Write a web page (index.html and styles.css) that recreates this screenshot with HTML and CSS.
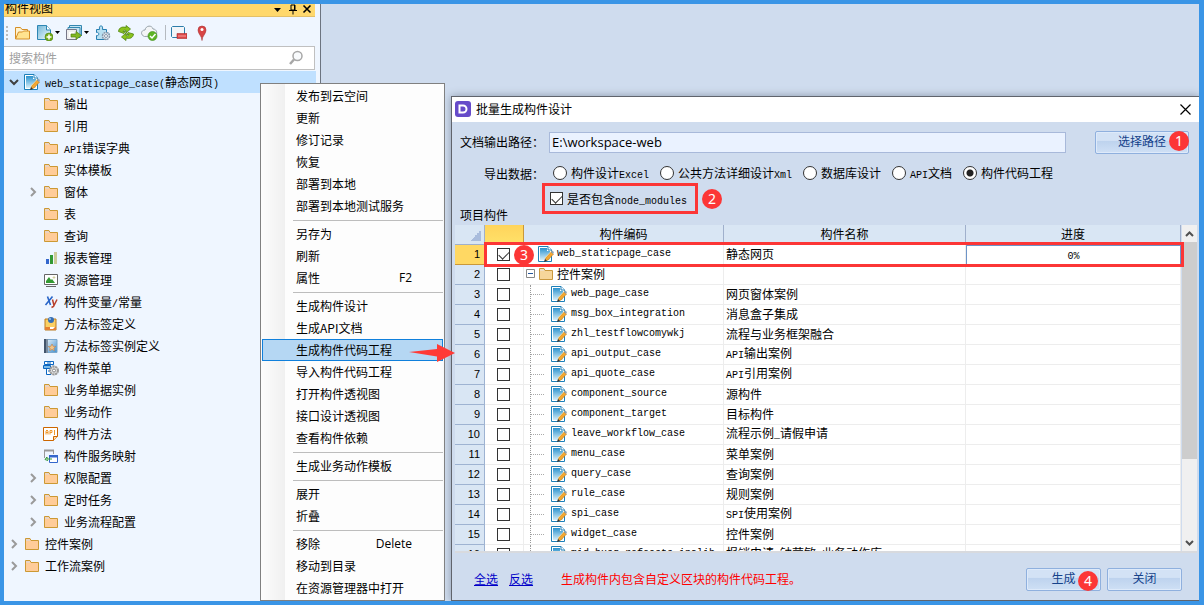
FILE: index.html
```html
<!DOCTYPE html>
<html lang="zh-CN">
<head>
<meta charset="utf-8">
<title>批量生成构件设计</title>
<link rel="stylesheet" href="styles.css">
</head>
<body>
<svg class="defs" aria-hidden="true">
  <defs>
    <linearGradient id="g-doc" x1="0" y1="0" x2="0" y2="1"><stop offset="0" stop-color="#2b93cf"/><stop offset="1" stop-color="#d8eef8"/></linearGradient>
    <linearGradient id="g-page" x1="0" y1="0" x2="1" y2="1"><stop offset="0" stop-color="#6fb6d6"/><stop offset="1" stop-color="#f4fbff"/></linearGradient>
    <linearGradient id="g-book" x1="0" y1="0" x2="1" y2="1"><stop offset="0" stop-color="#f4f8fb"/><stop offset="1" stop-color="#3f8fd0"/></linearGradient>
    <symbol id="folder" viewBox="0 0 16 16"><path d="M1.500 2.500h4.500l1 2h7.500v9h-13z" fill="#ffcc99" stroke="#cc9933"/><path d="M2 3h3.500l1 2H2z" fill="#e9d3c3"/></symbol>
    <symbol id="folder-y" viewBox="0 0 16 16"><path d="M1.500 2.500h4.500l1 2h7.500v9h-13z" fill="#f6d69a" stroke="#c9983e"/><path d="M2 3h3.500l1 2H2z" fill="#f0dfc4"/></symbol>
    <symbol id="doc" viewBox="0 0 16 16"><path d="M1 .5h9l3.500 3.500v11.500H.5V.5z" fill="#fff" stroke="#1c7fb8"/><path d="M2 2h7v3h3v9H2z" fill="url(#g-doc)"/><path d="M10 .5V4h3.500" fill="#fff" stroke="#1c7fb8"/><path d="M7 15l1-3.500 5-5.500 2.500 2L10 14z" fill="#f5a832" stroke="#b87718" stroke-width=".6"/><path d="M7 12l7-7.500" stroke="#ffe3a0" stroke-width=".8"/><path d="M13 6l1-1.500 2 1.500-1 2z" fill="#8da3b8"/><path d="M6 16l1-3 2 2z" fill="#333"/></symbol>
    <symbol id="chev" viewBox="0 0 10 10"><path d="M3 1l4 4-4 4" fill="none" stroke="#9a9a9a" stroke-width="2"/></symbol>
    <symbol id="chev-down" viewBox="0 0 10 10"><path d="M1 3l4 4 4-4" fill="none" stroke="#404040" stroke-width="2"/></symbol>
  </defs>
</svg>
<div class="app">
  <aside class="side">
    <header class="side-title"><span>构件视图</span>
      <svg width="38" height="12" viewBox="0 0 38 12"><path d="M0 5h7l-3.500 4z"/><path d="M17 2h4v5h-4zM15 7.500h8M19 8v3.500M20.500 2v5" fill="none" stroke="#000"/><path d="M29.500 2.500l7 7m0-7l-7 7" stroke="#000" stroke-width="1.600"/></svg>
    </header>
    <div class="toolbar">
      <svg class="grip" width="3" height="16" viewBox="0 0 3 16"><path d="M0 1h2v2H0zM0 5h2v2H0zM0 9h2v2H0zM0 13h2v2H0z" fill="#bbb"/></svg>
      <button aria-label="打开"><svg width="16" height="16" viewBox="0 0 16 16"><path d="M1.500 14V2.500h5l1.500 2h5.500V7" fill="#fff3cf" stroke="#d58f28"/><path d="M1.500 14l3-7h4l1 -1h6v8z" fill="#ffe390" stroke="#d58f28"/></svg></button>
      <button class="drop" aria-label="新建"><svg width="16" height="16" viewBox="0 0 16 16"><path d="M.5.5h9L13.500 5v9.500H.5z" fill="url(#g-page)" stroke="#2c86b4"/><path d="M9.500.5V5h4" fill="#fff" stroke="#2c86b4"/><circle cx="12" cy="12" r="4" fill="#73ad18" stroke="#4e8212" stroke-width=".6"/><path d="M12 9.500v5M9.500 12h5" stroke="#fff" stroke-width="1.500"/></svg><svg width="5" height="4" viewBox="0 0 5 4"><path d="M0 0h5L2.500 3z"/></svg></button>
      <button class="drop" aria-label="导出"><svg width="16" height="16" viewBox="0 0 16 16"><path d="M3.500.5h12v10h-12z" fill="#c4e4f2" stroke="#3387b0"/><path d="M2 2.500h12v10H2z" fill="#c4e4f2" stroke="#3387b0"/><path d="M.5 4.500h10v10H.5z" fill="#eee" stroke="#778"/><path d="M3 7h5v5H3z" fill="#fff"/><path d="M5 9h5V6.500l5.500 4-5.500 4V12H5z" fill="#82b821" stroke="#517e12" stroke-width=".7"/></svg><svg width="5" height="4" viewBox="0 0 5 4"><path d="M0 0h5L2.500 3z"/></svg></button>
      <button aria-label="组件"><svg width="16" height="16" viewBox="0 0 16 16"><path d="M1.500 4.500h3c-1-5 4-5 3 0h4V8c4-1 3 4 0 3v3.500h-10v-4c3 1 3-4 0-3z" fill="#b9e0f1" stroke="#267fb1"/><circle cx="11" cy="11" r="3.500" fill="#e6edf3" stroke="#8798aa" stroke-width="1.500" stroke-dasharray="2 .7"/><circle cx="11" cy="11" r="1.500" fill="#fff" stroke="#8798aa"/></svg></button>
      <button aria-label="刷新"><svg width="16" height="16" viewBox="0 0 16 16"><path d="M.5 6.500C1 2 5 1.500 8 2.500V.5L12.500 4 8 8V5.500C6.500 5 5.500 5 5 6.500h2.500L6 8.500zM15.500 9c-.5 4.500-4.500 5-7.500 4v2.500L3.500 12 8 8v2.500c1.500.5 2.500.5 3-1H8.500L10 7.500z" fill="#8ac31d" stroke="#4f8311" stroke-width=".8"/></svg></button>
      <button aria-label="提交"><svg width="17" height="16" viewBox="0 0 17 16"><path d="M3.500 11.500C-1 10 0 5 4 5c1-5 7-5 8-1 4 0 5 5 2 7z" fill="#f3f5f7" stroke="#98a3aa"/><circle cx="11.500" cy="11" r="4.500" fill="#5db526" stroke="#3c8c16" stroke-width=".6"/><path d="M9 11l2 2 3.500-4" fill="none" stroke="#fff" stroke-width="1.500"/></svg></button>
      <span class="bar"></span>
      <button class="last-tool" aria-label="移除"><svg width="16" height="16" viewBox="0 0 16 16"><path d="M1.500 1.500h11l1 1v9l-1 1h-11l-1-1v-9z" fill="#f2f5f8" stroke="#2c7daa"/><path d="M6 8.500h10v5H6z" fill="#dc4747" stroke="#a82a2a" stroke-width=".6"/><path d="M7 11h8" stroke="#f5a0a0"/></svg></button>
      <button aria-label="定位"><svg width="10" height="16" viewBox="0 0 10 16"><path d="M5 15.500C5 11 1 9 1 5a4 4 0 0 1 8 0c0 4-4 6-4 10.500z" fill="#d84545" stroke="#a93434" stroke-width=".6"/><circle cx="5" cy="4.500" r="1.500" fill="#fff"/></svg></button>
    </div>
    <div class="search"><input type="text" placeholder="搜索构件" aria-label="搜索构件"><svg width="16" height="16" viewBox="0 0 16 16"><circle cx="9.500" cy="6" r="4.500" fill="#f9fbfd" stroke="#a7a7a7" stroke-width="1.500"/><path d="M6 9.500L2 14" stroke="#a7a7a7" stroke-width="2.500"/></svg></div>
    <ul class="tree">
      <li class="on"><svg class="tw"><use href="#chev-down"/></svg><svg class="ic"><use href="#doc"/></svg><span><span class="mono">web_staticpage_case(</span>静态网页<span class="mono">)</span></span></li>
      <li class="l1"><i class="tw"></i><svg class="ic"><use href="#folder"/></svg>输出</li>
      <li class="l1"><i class="tw"></i><svg class="ic"><use href="#folder"/></svg>引用</li>
      <li class="l1"><i class="tw"></i><svg class="ic"><use href="#folder"/></svg><span><span class="mono">API</span>错误字典</span></li>
      <li class="l1"><i class="tw"></i><svg class="ic"><use href="#folder"/></svg>实体模板</li>
      <li class="l1"><svg class="tw"><use href="#chev"/></svg><svg class="ic"><use href="#folder"/></svg>窗体</li>
      <li class="l1"><i class="tw"></i><svg class="ic"><use href="#folder"/></svg>表</li>
      <li class="l1"><i class="tw"></i><svg class="ic"><use href="#folder"/></svg>查询</li>
      <li class="l1"><i class="tw"></i><svg class="ic" viewBox="0 0 16 16"><path d="M3 9h3v5H3z" fill="#3366cc"/><path d="M7 5h3v9H7z" fill="#339933"/><path d="M11 2h3v12h-3z" fill="#cccc99"/></svg>报表管理</li>
      <li class="l1"><i class="tw"></i><svg class="ic" viewBox="0 0 16 16"><path d="M1.500 2.500h13v10h-13z" fill="#fff" stroke="#666"/><path d="M3 11V9l3-4 2 3 1-1 3 4z" fill="#339933"/><path d="M11 3.500l.6 1.400 1.400.6-1.400.6-.6 1.400-.6-1.400L9 5.500l1.400-.6z" fill="#cccc99"/><path d="M3 14.500h10" stroke="#666"/></svg>资源管理</li>
      <li class="l1"><i class="tw"></i><svg class="ic" viewBox="0 0 16 16"><path d="M4.500 2.500l3 8.500M9.500 2.500L2.500 11" stroke="#2a66c8" stroke-width="1.600" fill="none"/><path d="M9.500 5.500l1.500 6M14 5.500l-3.500 7-2 1" stroke="#b8402c" stroke-width="1.500" fill="none"/></svg><span>构件变量<span class="mono">/</span>常量</span></li>
      <li class="l1"><i class="tw"></i><svg class="ic" viewBox="0 0 16 16"><path d="M2 3h11v11H2z" fill="#fbd064" stroke="#b97a20"/><path d="M2 11h11v3H2z" fill="#e58032"/><path d="M7 11h5l-2 2H7z" fill="#fff"/><circle cx="8" cy="4" r="3" fill="#356eb4"/><circle cx="7" cy="3" r="1" fill="#9fc4ea"/></svg>方法标签定义</li>
      <li class="l1"><i class="tw"></i><svg class="ic" viewBox="0 0 16 16"><path d="M1.500 1.500h12.500v13h-12.500z" fill="url(#g-book)" stroke="#7ba7cc"/><path d="M1 1h4v14H1z" fill="#43546b"/><path d="M4 1v14" stroke="#b8c8d8"/><path d="M9 6l1.200 2.300 2.600.2-2 1.700.7 2.500L9 11.400l-2.400 1.300.6-2.500-2-1.700 2.600-.2z" fill="#f3c486" stroke="#b87d4b" stroke-width=".6"/></svg>方法标签实例定义</li>
      <li class="l1"><i class="tw"></i><svg class="ic" viewBox="0 0 16 16"><path d="M2 1.500h8v4M3.500 8v6.500H8" fill="#fff" stroke="#0a66c2"/><path d="M1.500 1.500h9v3h-9z" fill="#fff" stroke="#0a66c2"/><path d="M.5 5.500h7v3h-7z" fill="#7dbbe8" stroke="#0a66c2"/><path d="M4 3h4M5 11h3" stroke="#0a66c2"/><circle cx="11" cy="10.500" r="4" fill="#ddd" stroke="#999" stroke-width="2" stroke-dasharray="2.200 .6"/><circle cx="11" cy="10.500" r="1.500" fill="#fff" stroke="#888"/></svg>构件菜单</li>
      <li class="l1"><i class="tw"></i><svg class="ic"><use href="#folder"/></svg>业务单据实例</li>
      <li class="l1"><i class="tw"></i><svg class="ic"><use href="#folder"/></svg>业务动作</li>
      <li class="l1"><i class="tw"></i><svg class="ic" viewBox="0 0 16 16"><path d="M.5 1.500h14v9l-4 4H.5z" fill="#fff" stroke="#cc6600"/><path d="M10.500 14.500v-4h4" fill="#ffdca8" stroke="#cc6600"/><path d="M3 8.500V5l1-1 1 1v3.500M3 6.500h2M7 8.500v-4h2v2H7M11.500 4v5" fill="none" stroke="#f0992e"/></svg>构件方法</li>
      <li class="l1"><i class="tw"></i><svg class="ic" viewBox="0 0 16 16"><path d="M1.500 10V2.500h9V6" fill="none" stroke="#999"/><path d="M1 1.500h10v2H1z" fill="#999"/><path d="M6.500 8.500h8v6h-8z" fill="#fff" stroke="#3366cc"/><path d="M6 7h9v2.500H6z" fill="#3366cc"/><path d="M9 11H4V9l-2 2.500 3 1" fill="none" stroke="#339933"/></svg>构件服务映射</li>
      <li class="l1"><svg class="tw"><use href="#chev"/></svg><svg class="ic"><use href="#folder"/></svg>权限配置</li>
      <li class="l1"><svg class="tw"><use href="#chev"/></svg><svg class="ic"><use href="#folder"/></svg>定时任务</li>
      <li class="l1"><svg class="tw"><use href="#chev"/></svg><svg class="ic"><use href="#folder"/></svg>业务流程配置</li>
      <li><svg class="tw"><use href="#chev"/></svg><svg class="ic"><use href="#folder"/></svg>控件案例</li>
      <li><svg class="tw"><use href="#chev"/></svg><svg class="ic"><use href="#folder"/></svg>工作流案例</li>
    </ul>
  </aside>

  <menu class="menu">
    <li><button>发布到云空间</button></li>
    <li><button>更新</button></li>
    <li><button>修订记录</button></li>
    <li><button>恢复</button></li>
    <li><button>部署到本地</button></li>
    <li><button>部署到本地测试服务</button></li>
    <li class="sep"></li>
    <li><button>另存为</button></li>
    <li><button>刷新</button></li>
    <li><button>属性<kbd>F2</kbd></button></li>
    <li class="sep"></li>
    <li><button>生成构件设计</button></li>
    <li><button>生成API文档</button></li>
    <li><button class="hot">生成构件代码工程</button></li>
    <li><button>导入构件代码工程</button></li>
    <li><button>打开构件透视图</button></li>
    <li><button>接口设计透视图</button></li>
    <li><button>查看构件依赖</button></li>
    <li class="sep"></li>
    <li><button>生成业务动作模板</button></li>
    <li class="sep"></li>
    <li><button>展开</button></li>
    <li><button>折叠</button></li>
    <li class="sep"></li>
    <li><button>移除<kbd>Delete</kbd></button></li>
    <li><button>移动到目录</button></li>
    <li><button>在资源管理器中打开</button></li>
  </menu>

  <section class="dialog" role="dialog" aria-labelledby="dlg-title">
    <header class="dlg-head">
      <svg width="16" height="16" viewBox="0 0 16 16"><rect width="16" height="16" rx="3" fill="#664bc9"/><path d="M4.500 4.500H8a3.500 3.500 0 0 1 0 7H4.500z" fill="none" stroke="#fff" stroke-width="2"/></svg>
      <h1 id="dlg-title">批量生成构件设计</h1>
      <button aria-label="关闭窗口"><svg width="11" height="11" viewBox="0 0 11 11"><path d="M.5.5l10 10m0-10l-10 10" stroke="#000" stroke-width="1.200"/></svg></button>
    </header>
    <div class="path-row">
      <label for="path">文档输出路径：</label>
      <input id="path" type="text" value="E:\workspace-web">
      <button class="btn wide">选择路径<b class="badge">1</b></button>
    </div>
    <div class="radio-row">
      <span class="cap">导出数据：</span>
      <label><input type="radio" name="kind"><span>构件设计<span class="mono">Excel</span></span></label>
      <label><input type="radio" name="kind"><span>公共方法详细设计<span class="mono">Xml</span></span></label>
      <label><input type="radio" name="kind"><span>数据库设计</span></label>
      <label><input type="radio" name="kind"><span><span class="mono">API</span>文档</span></label>
      <label><input type="radio" name="kind" checked><span>构件代码工程</span></label>
    </div>
    <div class="check-row">
      <label class="red-box"><input type="checkbox" checked><span>是否包含<span class="mono">node_modules</span></span></label>
      <b class="badge">2</b>
    </div>
    <h2>项目构件</h2>
    <div class="grid">
      <div class="scroller">
        <table>
          <colgroup><col class="c-no"><col class="c-ck"><col class="c-code"><col class="c-name"><col></colgroup>
          <thead><tr><th class="corner"></th><th class="gold"></th><th>构件编码</th><th>构件名称</th><th>进度</th></tr></thead>
          <tbody>
            <tr class="cur"><th>1</th><td class="ck"><input type="checkbox" aria-label="1" checked></td><td><div class="node top"><svg class="ic"><use href="#doc"/></svg><span class="mono">web_staticpage_case</span></div></td><td>静态网页</td><td class="pct"><span class="mono">0%</span></td></tr>
            <tr><th>2</th><td class="ck"><input type="checkbox" aria-label="2"></td><td><div class="node group"><svg width="9" height="9" viewBox="0 0 9 9"><path d="M.5.5h8v8h-8z" fill="#fff" stroke="#888"/><path d="M2 4.500h5" stroke="#24569c"/></svg><svg class="ic"><use href="#folder-y"/></svg>控件案例</div></td><td></td><td></td></tr>
            <tr><th>3</th><td class="ck"><input type="checkbox" aria-label="3"></td><td><div class="node leaf"><i></i><svg class="ic"><use href="#doc"/></svg><span class="mono">web_page_case</span></div></td><td>网页窗体案例</td><td></td></tr>
            <tr><th>4</th><td class="ck"><input type="checkbox" aria-label="4"></td><td><div class="node leaf"><i></i><svg class="ic"><use href="#doc"/></svg><span class="mono">msg_box_integration</span></div></td><td>消息盒子集成</td><td></td></tr>
            <tr><th>5</th><td class="ck"><input type="checkbox" aria-label="5"></td><td><div class="node leaf"><i></i><svg class="ic"><use href="#doc"/></svg><span class="mono">zhl_testflowcomywkj</span></div></td><td>流程与业务框架融合</td><td></td></tr>
            <tr><th>6</th><td class="ck"><input type="checkbox" aria-label="6"></td><td><div class="node leaf"><i></i><svg class="ic"><use href="#doc"/></svg><span class="mono">api_output_case</span></div></td><td><span class="mono">API</span>输出案例</td><td></td></tr>
            <tr><th>7</th><td class="ck"><input type="checkbox" aria-label="7"></td><td><div class="node leaf"><i></i><svg class="ic"><use href="#doc"/></svg><span class="mono">api_quote_case</span></div></td><td><span class="mono">API</span>引用案例</td><td></td></tr>
            <tr><th>8</th><td class="ck"><input type="checkbox" aria-label="8"></td><td><div class="node leaf"><i></i><svg class="ic"><use href="#doc"/></svg><span class="mono">component_source</span></div></td><td>源构件</td><td></td></tr>
            <tr><th>9</th><td class="ck"><input type="checkbox" aria-label="9"></td><td><div class="node leaf"><i></i><svg class="ic"><use href="#doc"/></svg><span class="mono">component_target</span></div></td><td>目标构件</td><td></td></tr>
            <tr><th>10</th><td class="ck"><input type="checkbox" aria-label="10"></td><td><div class="node leaf"><i></i><svg class="ic"><use href="#doc"/></svg><span class="mono">leave_workflow_case</span></div></td><td>流程示例<span class="mono">_</span>请假申请</td><td></td></tr>
            <tr><th>11</th><td class="ck"><input type="checkbox" aria-label="11"></td><td><div class="node leaf"><i></i><svg class="ic"><use href="#doc"/></svg><span class="mono">menu_case</span></div></td><td>菜单案例</td><td></td></tr>
            <tr><th>12</th><td class="ck"><input type="checkbox" aria-label="12"></td><td><div class="node leaf"><i></i><svg class="ic"><use href="#doc"/></svg><span class="mono">query_case</span></div></td><td>查询案例</td><td></td></tr>
            <tr><th>13</th><td class="ck"><input type="checkbox" aria-label="13"></td><td><div class="node leaf"><i></i><svg class="ic"><use href="#doc"/></svg><span class="mono">rule_case</span></div></td><td>规则案例</td><td></td></tr>
            <tr><th>14</th><td class="ck"><input type="checkbox" aria-label="14"></td><td><div class="node leaf"><i></i><svg class="ic"><use href="#doc"/></svg><span class="mono">spi_case</span></div></td><td><span class="mono">SPI</span>使用案例</td><td></td></tr>
            <tr><th>15</th><td class="ck"><input type="checkbox" aria-label="15"></td><td><div class="node leaf"><i></i><svg class="ic"><use href="#doc"/></svg><span class="mono">widget_case</span></div></td><td>控件案例</td><td></td></tr>
            <tr><th>16</th><td class="ck"><input type="checkbox" aria-label="16"></td><td><div class="node leaf"><i></i><svg class="ic"><use href="#doc"/></svg><span class="mono">mid_bxsq_refcosts_inalib</span></div></td><td>报销申请<span class="mono">_</span>钟莹敏<span class="mono">_</span>业务动作库</td><td></td></tr>
          </tbody>
        </table>
      </div>
      <div class="scrollbar">
        <svg width="15" height="17" viewBox="0 0 15 17"><path d="M4 11l3.500-3.500L11 11" fill="none" stroke="#505050" stroke-width="2"/></svg>
        <span class="thumb"></span><span class="rest"></span>
        <svg width="15" height="17" viewBox="0 0 15 17"><path d="M4 7l3.500 3.500L11 7" fill="none" stroke="#505050" stroke-width="2"/></svg>
      </div>
      <div class="mark"></div>
      <b class="badge third">3</b>
    </div>
    <footer>
      <a href="#">全选</a><a href="#">反选</a>
      <p>生成构件内包含自定义区块的构件代码工程。</p>
      <button class="btn">生成<b class="badge">4</b></button>
      <button class="btn">关闭</button>
    </footer>
  </section>
  <svg class="arrow" width="46" height="18" viewBox="0 0 46 18"><path d="M0 8l28-3V0l18 9-18 9v-5.500z" fill="#ff3a36"/></svg>
</div>
</body>
</html>
```
FILE: styles.css
```css
* { box-sizing: border-box; }
body, ul, menu, h1, h2, p { margin: 0; padding: 0; font-weight: normal; }
body {
  font: 12px/16px "Noto Sans CJK SC", sans-serif;
  color: #000;
}
button, input { font: inherit; color: inherit; margin: 0; }
button { background: none; border: 0; padding: 0; }
svg { display: block; flex: none; }
.defs { position: absolute; width: 0; height: 0; }
.mono { font: 10px/10px "Liberation Mono", monospace; }

.app {
  position: relative;
  height: 100vh;
  overflow: hidden;
  display: flex;
  border: solid #3a95e6;
  border-width: 4px 5px 4px 4px;
  background: #cfdcee;
}

/* component tree */
.side {
  width: 317px;
  padding-right: 5px;
  background: #eff6ff;
  border-right: 1px solid #6c7480;
  display: flex;
  flex-direction: column;
}
.side-title {
  display: flex;
  align-items: center;
  justify-content: space-between;
  height: 17px;
  margin-top: -4px;
  padding: 0 3px 0 1px;
  background: #ffd86c;
  border-bottom: 1px solid #e3c068;
}
.side-title svg { margin-top: 2px; }
.toolbar {
  display: flex;
  align-items: center;
  height: 29px;
  padding: 2px 0 0 2px;
  gap: 7px;
}
.toolbar .grip { margin-right: -2px; }
.drop { display: flex; align-items: center; gap: 2px; margin-right: -1px; }
.bar { width: 1px; height: 15px; margin-right: -2px; background: #b5bac0; }
.last-tool { margin-right: 3px; }
.search {
  display: flex;
  align-items: center;
  height: 24px;
  padding: 0 10px 0 5px;
  background: #fff;
  border: 1px solid #c0c0c0;
  border-left: 0;
}
.search input { flex: 1; border: 0; padding: 0; background: none; outline: 0; }
.search input::placeholder { color: #a0a0a0; }
.tree { list-style: none; padding-top: 1px; margin-right: -1px; }
.tree li {
  display: flex;
  align-items: center;
  height: 22px;
  padding-left: 5px;
  gap: 5px;
  white-space: nowrap;
}
.tree .l1 { padding-left: 24px; }
.tree .on { background: #bfe0ff; }
.tree .tw { width: 10px; height: 10px; }
.ic { width: 16px; height: 16px; }

/* context menu */
.menu {
  position: absolute;
  left: 256px;
  top: 79px;
  width: 185px;
  padding: 1px;
  list-style: none;
  border: 1px solid #808080;
  background: linear-gradient(90deg, #fcfcfc, #f0f0f0 24px, #fdfdfd 24px);
}
.menu button {
  display: flex;
  align-items: center;
  justify-content: space-between;
  width: 100%;
  height: 22px;
  padding: 0 30px 0 33px;
  border: 1px solid transparent;
}
.menu .hot { background: #b5d7f3; border-color: #1080dc; }
.menu kbd { font: 12px/16px "Open Sans", sans-serif; }
.menu .sep { height: 6px; padding: 3px 0 0 31px; }
.menu .sep::before { content: ""; display: block; border-top: 1px solid #bdbdbd; }
.arrow { position: absolute; left: 405px; top: 340px; }

/* dialog */
.dialog {
  position: absolute;
  left: 447px;
  right: 0;
  top: 92px;
  bottom: 0;
  display: flex;
  flex-direction: column;
  background: #cfdcee;
  border: solid #60646c;
  border-width: 1px 0 1px 1px;
  box-shadow: 0 0 8px #8c98aa;
}
.dlg-head {
  display: flex;
  align-items: center;
  height: 25px;
  padding: 0 8px 1px 3px;
  gap: 5px;
  background: #fff;
}
.dlg-head h1 { flex: 1; font-size: 12px; line-height: 16px; }
.path-row {
  display: flex;
  align-items: center;
  height: 40px;
  padding: 0 10px 0 8px;
}
.path-row label { width: 89px; }
.path-row input {
  flex: 1;
  min-width: 0;
  height: 21px;
  margin-right: 29px;
  padding: 0 2px;
  border: 1px solid #a8b9da;
  background: #eaf2ff;
  font: 13px/16px "Open Sans", sans-serif;
}
.btn {
  display: flex;
  align-items: center;
  justify-content: center;
  position: relative;
  width: 75px;
  height: 23px;
  padding-bottom: 2px;
  border: 1px solid #8fb0de;
  border-radius: 2px;
  background: linear-gradient(#d3e2f5 40%, #bed3ee 45%, #cfe0f5);
  box-shadow: inset 0 0 0 1px #deeafa;
  color: #15428b;
}
.btn.wide { width: 94px; }
.badge {
  flex: none;
  width: 20px;
  height: 20px;
  border-radius: 50%;
  background: #fc3636;
  color: #fff;
  font: 14px/20px "Noto Sans", sans-serif;
  text-align: center;
}
.btn .badge { position: absolute; right: 2px; top: 2px; }
.btn.wide .badge { right: -1px; top: -1px; }
.radio-row {
  display: flex;
  align-items: center;
  height: 21px;
  padding-left: 32px;
  gap: 11px;
}
.radio-row .cap { width: 58px; white-space: nowrap; padding-top: 3px; }
.radio-row label, .check-row label { display: flex; align-items: center; gap: 4px; white-space: nowrap; }
input[type="radio"] {
  appearance: none;
  width: 14px;
  height: 14px;
  border: 1px solid #333;
  border-radius: 50%;
  background: #fff;
}
input[type="radio"]:checked { background: radial-gradient(circle, #222 3px, #fff 4px); }
input[type="checkbox"] {
  appearance: none;
  display: block;
  width: 13px;
  height: 13px;
  border: 1px solid #333;
  background: #fff;
}
input[type="checkbox"]:checked::before {
  content: "";
  display: block;
  width: 9px;
  height: 5px;
  margin: 2px 0 0 1px;
  border: solid #333;
  border-width: 0 0 1px 1px;
  transform: rotate(-45deg);
}
.check-row { display: flex; align-items: center; height: 31px; padding-left: 90px; gap: 4px; }
.red-box { height: 31px; padding: 0 8px 0 5px; border: 3px solid #fc3636; }
h2 { height: 11px; padding-left: 8px; font-size: 12px; line-height: 1px; }
.grid {
  position: relative;
  flex: 1;
  min-height: 0;
  display: flex;
  gap: 1px;
  margin: 0 2px 0 3px;
  border-bottom: 2px solid #d8dade;
}
.scroller { flex: 1; min-width: 0; overflow: hidden; background: #fff; }
table { width: 100%; table-layout: fixed; border-collapse: separate; border-spacing: 0; }
.c-no { width: 30px; }
.c-ck { width: 39px; }
.c-code { width: 200px; }
.c-name { width: 242px; }
th, td {
  height: 20px;
  padding: 0 2px 2px;
  border: solid #ededed;
  border-width: 0 1px 1px 0;
  font-weight: normal;
  line-height: 14px;
  overflow: hidden;
  white-space: nowrap;
}
thead th { background: #d9e6f4; border-color: #a0b0cc; }
thead .corner {
  background: linear-gradient(135deg, #d9e6f4 50%, #a9bcdc 50%) right 3px bottom 3px / 11px 11px no-repeat #d9e6f4;
}
thead .gold { background: linear-gradient(#ffd45c, #ffe169); border-color: #c9983a; }
tbody th {
  padding: 0 4px 2px 0;
  background: #d9e6f4;
  border-color: #9eb3d2;
  font: 11px/14px "Liberation Sans", sans-serif;
  text-align: right;
}
.cur th { background: #ffd863; border-color: #c9983a; }
td.ck { padding: 0 0 1px 12px; }
.cur .pct { border: 1px solid #6d94c8; }
.pct { text-align: center; }
.node { display: flex; align-items: center; height: 17px; gap: 3px; }
.node.top { padding-left: 12px; }
.node.leaf { padding-left: 4px; gap: 4px; }
.node.leaf i {
  align-self: flex-start;
  width: 17px;
  height: 20px;
  border-left: 1px dotted #999;
  background: repeating-linear-gradient(90deg, #aaa 0 1px, transparent 1px 2px) 0 9px / 13px 1px no-repeat;
}
.scrollbar { width: 15px; display: flex; flex-direction: column; background: #f0f0f0; }
.thumb { flex: 217; background: #cdcdcd; }
.rest { flex: 75; }
.mark {
  position: absolute;
  left: 29px;
  right: 13px;
  top: 17px;
  height: 25px;
  border: 3px solid #fc3636;
}
.third { position: absolute; left: 59px; top: 20px; }
footer {
  display: flex;
  align-items: center;
  height: 47px;
  padding: 5px 17px 0 22px;
  gap: 6px;
}
footer a { margin-right: 5px; color: #0000c8; }
footer p { flex: 1; margin-left: 17px; color: #f00; }
```
